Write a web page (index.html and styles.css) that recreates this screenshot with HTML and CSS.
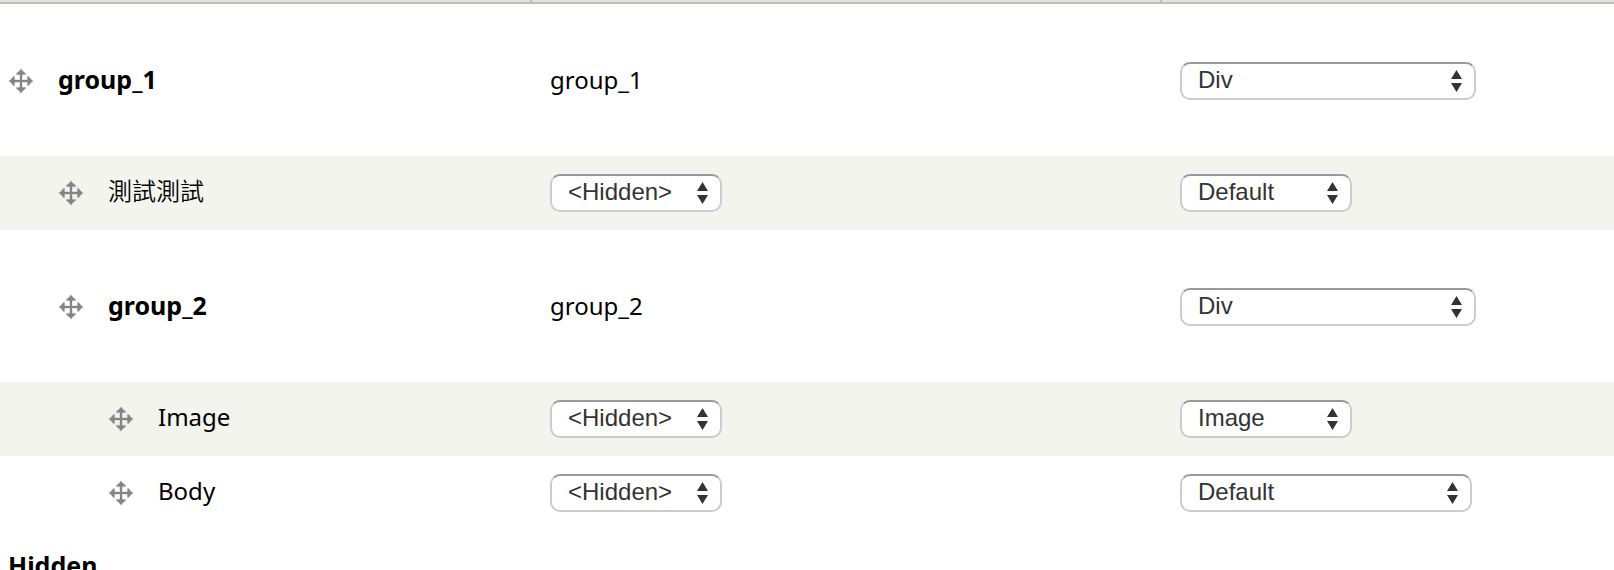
FILE: index.html
```html
<!DOCTYPE html>
<html lang="zh-Hant">
<head>
<meta charset="utf-8">
<title>Manage display</title>
<link rel="stylesheet" href="styles.css">
</head>
<body>
<svg class="sprite" aria-hidden="true">
  <symbol id="move" viewBox="0 0 26 26">
    <g fill="#858585" stroke="#858585" stroke-opacity=".25" stroke-width="1.5" stroke-linejoin="round">
      <path d="M13 1l1.500 2 3 2.500v1h-9v-1l3-2.500z"/>
      <path d="M13 25l1.500-2 3-2.500v-1h-9v1l3 2.500z"/>
      <path d="M1 13l2-1.500 2.500-3h1v9h-1l-2.500-3z"/>
      <path d="M25 13l-2-1.500-2.500-3h-1v9h1l2.500-3z"/>
      <path d="M12 5h2v7h7v2h-7v7h-2v-7H5v-2h7z"/>
    </g>
  </symbol>
</svg>
<table class="fields">
  <colgroup><col class="col-name"><col class="col-label"><col></colgroup>
  <thead>
    <tr><th></th><th></th><th></th></tr>
  </thead>
  <tbody>
    <tr class="group">
      <td><div class="name"><a class="handle" href="#" aria-label="Move group_1"><svg><use href="#move"/></svg></a><strong class="title">group_1</strong></div></td>
      <td>group_1</td>
      <td><select class="wide" aria-label="Format for group_1"><option>Div</option></select></td>
    </tr>
    <tr class="odd">
      <td><div class="name depth-1"><a class="handle" href="#" aria-label="Move 測試測試"><svg><use href="#move"/></svg></a><span class="title light">測試測試</span></div></td>
      <td><select aria-label="Label for 測試測試"><option>&lt;Hidden&gt;</option></select></td>
      <td><select aria-label="Format for 測試測試"><option>Default</option></select></td>
    </tr>
    <tr class="group">
      <td><div class="name depth-1"><a class="handle" href="#" aria-label="Move group_2"><svg><use href="#move"/></svg></a><strong class="title">group_2</strong></div></td>
      <td>group_2</td>
      <td><select class="wide" aria-label="Format for group_2"><option>Div</option></select></td>
    </tr>
    <tr class="odd">
      <td><div class="name depth-2"><a class="handle" href="#" aria-label="Move Image"><svg><use href="#move"/></svg></a><span class="title">Image</span></div></td>
      <td><select aria-label="Label for Image"><option>&lt;Hidden&gt;</option></select></td>
      <td><select aria-label="Format for Image"><option>Image</option></select></td>
    </tr>
    <tr>
      <td><div class="name depth-2"><a class="handle" href="#" aria-label="Move Body"><svg><use href="#move"/></svg></a><span class="title">Body</span></div></td>
      <td><select aria-label="Label for Body"><option>&lt;Hidden&gt;</option></select></td>
      <td><select class="text-format" aria-label="Format for Body"><option>Default</option></select></td>
    </tr>
    <tr>
      <td colspan="3"><div class="name"><strong class="title">Hidden</strong></div></td>
    </tr>
  </tbody>
</table>
</body>
</html>
```
FILE: styles.css
```css
body {
  margin: 0;
  background: #fff;
  color: #000;
  font: 24px/36px "Noto Sans", "Noto Sans CJK TC", sans-serif;
}

.sprite {
  display: none;
}

.fields {
  width: 100%;
  table-layout: fixed;
  border-collapse: separate;
  border-spacing: 0;
}

.col-name {
  width: 532px;
}

.col-label {
  width: 630px;
}

.fields th {
  height: 2px;
  padding: 0;
  background: linear-gradient(#bebfb9, #bebfb9) right / 2px 100% no-repeat #e1e2dc;
  border-bottom: 2px solid #bebfb9;
}

.fields th:last-child {
  background: #e1e2dc;
}

.fields td {
  padding: 18px;
  vertical-align: top;
}

.fields td:first-child {
  padding-left: 8px;
}

.fields .group td {
  padding-top: 58px;
  padding-bottom: 56px;
}

.odd {
  background: #f3f4ee;
}

.name {
  display: flex;
  align-items: center;
  gap: 24px;
  min-height: 38px;
}

.title {
  padding-bottom: 4px;
  line-height: 34px;
}

strong {
  font-size: 25px;
}

.light {
  font-weight: 350;
}

.depth-1 {
  padding-left: 50px;
}

.depth-2 {
  padding-left: 100px;
}

.handle,
.handle svg {
  display: block;
  width: 26px;
  height: 26px;
}

select {
  display: block;
  box-sizing: border-box;
  width: 172px;
  height: 38px;
  margin: 0;
  padding: 0 36px 3px 16px;
  appearance: none;
  border: 2px solid #ccc;
  border-top-color: #999;
  border-radius: 10px;
  background: url("data:image/svg+xml,%3Csvg xmlns='http://www.w3.org/2000/svg' width='11' height='22'%3E%3Cpath d='M5.500 0L11 9H0zM0 13h11L5.500 22z' fill='%23333'/%3E%3C/svg%3E") right 12px center no-repeat #fff;
  color: #333;
  font: 24px "Liberation Sans", Arial, sans-serif;
}

.wide {
  width: 296px;
}

.text-format {
  width: 292px;
}
```
